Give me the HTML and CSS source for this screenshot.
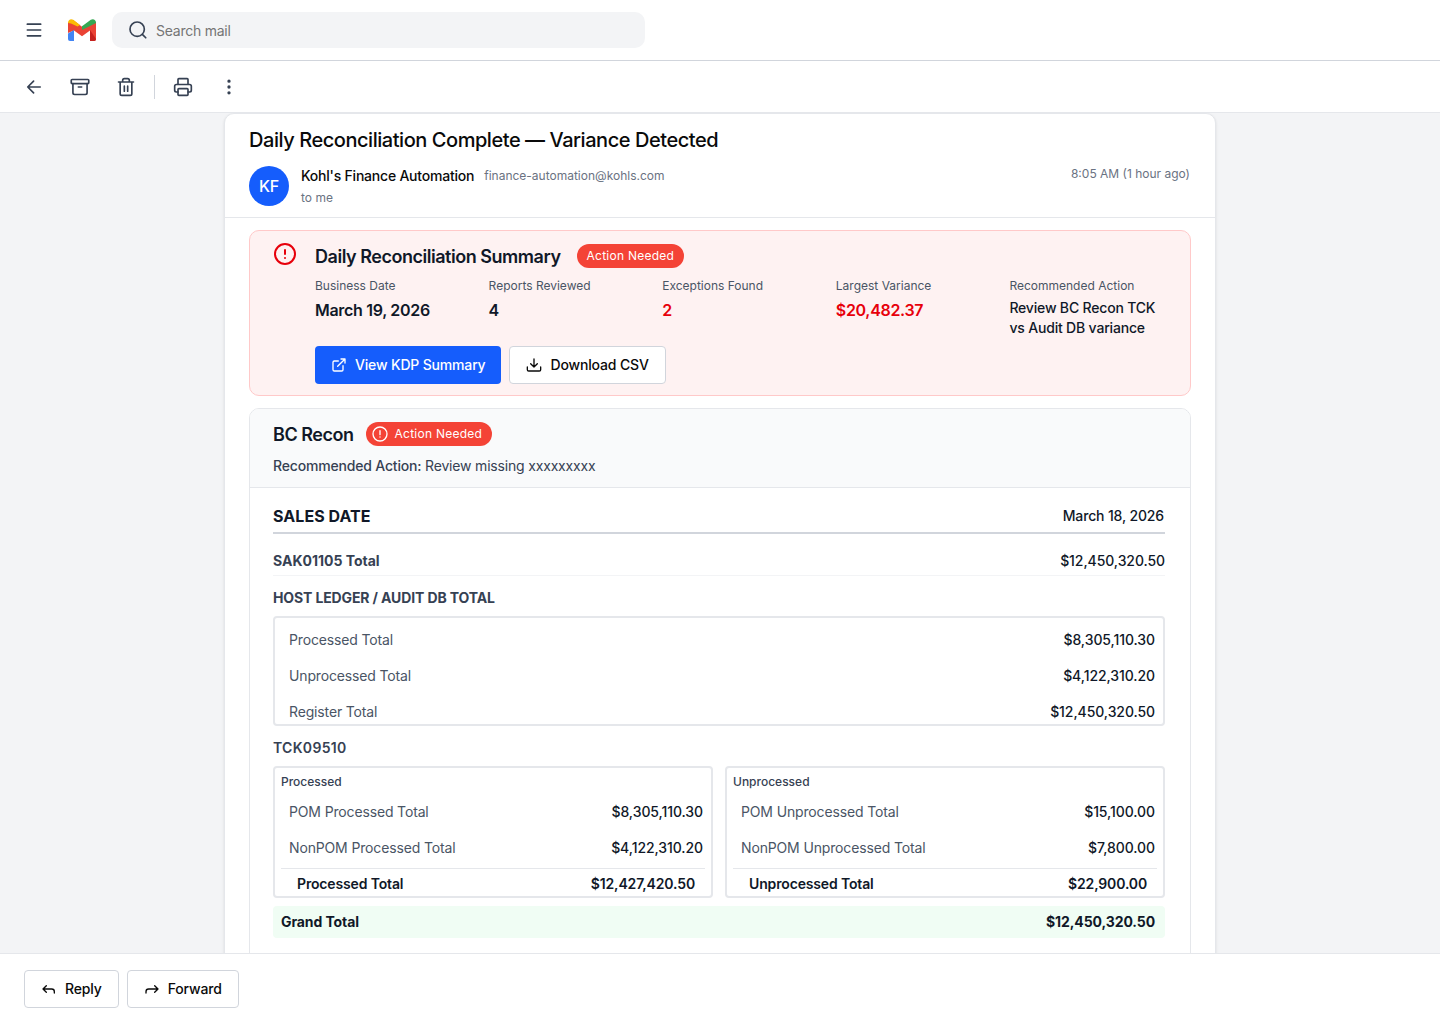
FILE: index.html
```html
<!DOCTYPE html>
<html lang="en">
<head>
  <meta charset="UTF-8">
  <title>Daily Reconciliation Complete — Variance Detected</title>
  <link rel="stylesheet" href="styles.css">
</head>
<body>
  <header class="topbar">
    <svg class="icon menu-icon" width="20" height="20" viewBox="0 0 24 24"><path d="M4 5h16M4 12h16M4 19h16"/></svg>
    <svg class="logo" width="28" height="22" viewBox="0 0 28 22">
      <path fill="#ea4335" d="M0 3.5L5.2 1 14 7.8 28 3v17a2 2 0 0 1-2 2h-4V11.5l-8 5.8-8-5.8L0 14z"/>
      <path fill="#4285f4" d="M0 14.5l6-3.5v11H2a2 2 0 0 1-2-2z"/>
      <path fill="#c5221f" d="M22 11l6 9a2 2 0 0 1-2 2h-4z"/>
      <path fill="#fbbc04" d="M0 4C0 .6 3-.8 5.2.8L12 6l-2.5 1.5L3 4.5z"/>
      <path fill="#34a853" d="M14 11V7.2L22.8.8C25-.8 28 .6 28 3.4V4z"/>
    </svg>
    <div class="search">
      <svg class="icon" width="20" height="20" viewBox="0 0 24 24"><circle cx="11" cy="11" r="8.6"/><path d="M21.3 21.3l-4.1-4.1"/></svg>
      <span>Search mail</span>
    </div>
  </header>

  <nav class="toolbar">
    <svg class="icon" width="20" height="20" viewBox="0 0 24 24"><path d="M11.5 19l-7-7 7-7M19.5 12h-15"/></svg>
    <svg class="icon" width="20" height="20" viewBox="0 0 24 24"><rect x="1.5" y="3" width="21" height="5" rx="1"/><path d="M3.5 8v11a2 2 0 0 0 2 2h13a2 2 0 0 0 2-2V8M10 12h4"/></svg>
    <svg class="icon" width="20" height="20" viewBox="0 0 24 24"><path d="M3 6h18M19 6v14a2 2 0 0 1-2 2H7a2 2 0 0 1-2-2V6M8 6V4a2 2 0 0 1 2-2h4a2 2 0 0 1 2 2v2M10 11v6M14 11v6"/></svg>
    <span class="divider"></span>
    <svg class="icon" width="20" height="20" viewBox="0 0 24 24"><path d="M6 18H4a2 2 0 0 1-2-2v-5a2 2 0 0 1 2-2h16a2 2 0 0 1 2 2v5a2 2 0 0 1-2 2h-2M6 9V3a1 1 0 0 1 1-1h10a1 1 0 0 1 1 1v6"/><rect x="6" y="14" width="12" height="8" rx="1"/></svg>
    <svg class="icon" width="20" height="20" viewBox="0 0 24 24"><circle cx="12" cy="5" r="1"/><circle cx="12" cy="12" r="1"/><circle cx="12" cy="19" r="1"/></svg>
  </nav>

  <main class="content">
    <article class="mail">
      <div class="mail-header">
        <h1>Daily Reconciliation Complete — Variance Detected</h1>
        <div class="sender">
          <div class="avatar">KF</div>
          <div class="sender-info">
            <div class="sender-line">
              <span class="sender-name">Kohl's Finance Automation</span>
              <span class="muted">finance-automation@kohls.com</span>
            </div>
            <div class="muted">to me</div>
          </div>
          <div class="muted time">8:05 AM (1 hour ago)</div>
        </div>
      </div>

      <section class="summary">
        <svg class="summary-icon" width="24" height="24" viewBox="0 0 24 24"><circle cx="12" cy="12" r="10"/><path d="M12 8v4M12 16h.01"/></svg>
        <div class="summary-body">
          <div class="title-row">
            <h2>Daily Reconciliation Summary</h2>
            <span class="badge">Action Needed</span>
          </div>
          <div class="stats">
            <div><div class="label">Business Date</div><div class="value">March 19, 2026</div></div>
            <div><div class="label">Reports Reviewed</div><div class="value">4</div></div>
            <div><div class="label">Exceptions Found</div><div class="value red">2</div></div>
            <div><div class="label">Largest Variance</div><div class="value red">$20,482.37</div></div>
            <div><div class="label">Recommended Action</div><div class="value small">Review BC Recon TCK vs Audit DB variance</div></div>
          </div>
          <div class="buttons">
            <button class="btn primary"><svg width="16" height="16" viewBox="0 0 24 24"><path d="M15 3h6v6M10 14L21 3M18 13v6a2 2 0 0 1-2 2H5a2 2 0 0 1-2-2V8a2 2 0 0 1 2-2h6"/></svg>View KDP Summary</button>
            <button class="btn"><svg width="16" height="16" viewBox="0 0 24 24"><path d="M12 15V3M22 15v4a2 2 0 0 1-2 2H4a2 2 0 0 1-2-2v-4M7 10l5 5 5-5"/></svg>Download CSV</button>
          </div>
        </div>
      </section>

      <section class="report">
        <div class="report-header">
          <div class="title-row">
            <h2>BC Recon</h2>
            <span class="badge with-icon"><svg width="16" height="16" viewBox="0 0 24 24"><circle cx="12" cy="12" r="10.5"/><path d="M12 7v6M12 16.5h.01"/></svg>Action Needed</span>
          </div>
          <p><b>Recommended Action:</b> Review missing xxxxxxxxx</p>
        </div>
        <div class="report-body">
          <div class="row sales-date"><span class="row-title">SALES DATE</span><span>March 18, 2026</span></div>
          <div class="row sak"><b>SAK01105 Total</b><span>$12,450,320.50</span></div>
          <h3>HOST LEDGER / AUDIT DB TOTAL</h3>
          <div class="box">
            <div class="row item"><span>Processed Total</span><b>$8,305,110.30</b></div>
            <div class="row item"><span>Unprocessed Total</span><b>$4,122,310.20</b></div>
            <div class="row item"><span>Register Total</span><b>$12,450,320.50</b></div>
          </div>
          <h3 class="tck">TCK09510</h3>
          <div class="columns">
            <div class="box split">
              <div class="box-title">Processed</div>
              <div class="row item"><span>POM Processed Total</span><b>$8,305,110.30</b></div>
              <div class="row item"><span>NonPOM Processed Total</span><b>$4,122,310.20</b></div>
              <div class="row subtotal"><span>Processed Total</span><span>$12,427,420.50</span></div>
            </div>
            <div class="box split">
              <div class="box-title">Unprocessed</div>
              <div class="row item"><span>POM Unprocessed Total</span><b>$15,100.00</b></div>
              <div class="row item"><span>NonPOM Unprocessed Total</span><b>$7,800.00</b></div>
              <div class="row subtotal"><span>Unprocessed Total</span><span>$22,900.00</span></div>
            </div>
          </div>
          <div class="row grand"><span>Grand Total</span><span>$12,450,320.50</span></div>
        </div>
      </section>
    </article>
  </main>

  <footer class="actions">
    <button class="btn"><svg width="16" height="16" viewBox="0 0 24 24"><path d="M20 18v-2a4 4 0 0 0-4-4H3M8 17l-5-5 5-5"/></svg>Reply</button>
    <button class="btn"><svg width="16" height="16" viewBox="0 0 24 24"><path d="M3 18v-2a4 4 0 0 1 4-4h14M16 17l5-5-5-5"/></svg>Forward</button>
  </footer>
</body>
</html>
```
FILE: styles.css
```css
* {
  box-sizing: border-box;
}
body {
  margin: 0;
  height: 1024px;
  display: flex;
  flex-direction: column;
  overflow: hidden;
  background: #fff;
  color: #101828;
  font-family: Inter, sans-serif;
  font-size: 14px;
  line-height: 20px;
  letter-spacing: -0.15px;
}
h1, h2, h3, p {
  margin: 0;
}
svg {
  fill: none;
  stroke: currentColor;
  stroke-width: 2;
  stroke-linecap: round;
  stroke-linejoin: round;
  flex-shrink: 0;
}

/* top bar */
.topbar {
  display: flex;
  align-items: center;
  height: 61px;
  padding: 0 24px;
  border-bottom: 1px solid #d1d5dc;
}
.icon {
  color: #364153;
}
.logo {
  margin-left: 24px;
  stroke: none;
}
.search {
  display: flex;
  align-items: center;
  gap: 8px;
  width: 533px;
  height: 36px;
  margin-left: 16px;
  padding: 0 16px;
  border-radius: 10px;
  background: #f3f4f6;
  color: #757575;
  letter-spacing: -0.25px;
}
.search span {
  padding-top: 1px;
}

.toolbar {
  display: flex;
  align-items: center;
  gap: 26px;
  height: 52px;
  padding: 0 24px;
  border-bottom: 1px solid #e5e7eb;
}
.divider {
  width: 1px;
  height: 24px;
  margin: 0 -8px;
  background: #d1d5dc;
}

/* mail */
.content {
  flex: 1;
  overflow: hidden;
  background: #f3f4f6;
}
.mail {
  width: 992px;
  height: 1200px;
  margin: 0 auto;
  border: 1px solid #e5e7eb;
  border-radius: 10px;
  background: #fff;
  box-shadow: 0 1px 3px rgba(0, 0, 0, 0.1);
}
.mail-header {
  height: 104px;
  padding: 12px 24px 0;
  border-bottom: 1px solid #e5e7eb;
}
h1 {
  color: #0a0a0a;
  font-size: 20px;
  font-weight: 500;
  line-height: 28px;
  letter-spacing: -0.45px;
}
.sender {
  display: flex;
  gap: 12px;
  margin-top: 12px;
}
.avatar {
  width: 40px;
  height: 40px;
  border-radius: 50%;
  background: #155dfc;
  color: #fff;
  font-size: 16px;
  font-weight: 500;
  line-height: 40px;
  letter-spacing: -0.31px;
  text-align: center;
}
.sender-info {
  flex: 1;
}
.sender-line {
  display: flex;
  gap: 10px;
  margin-bottom: 2px;
}
.sender-name {
  color: #0a0a0a;
  font-weight: 500;
  letter-spacing: -0.22px;
}
.muted {
  color: #6a7282;
  font-size: 12px;
  letter-spacing: 0;
}
.time {
  margin-right: 1px;
  line-height: 16px;
}

.summary {
  display: flex;
  gap: 18px;
  height: 166px;
  margin: 12px 24px 0;
  padding: 11px 23px 0;
  border: 1px solid #ffc9c9;
  border-radius: 10px;
  background: #fef2f2;
}
.summary-icon {
  color: #e7000b;
}
.summary-body {
  flex: 1;
}
.title-row {
  display: flex;
  align-items: center;
  height: 28px;
}
h2 {
  padding-top: 2px;
  font-size: 18px;
  font-weight: 600;
  line-height: 28px;
  letter-spacing: -0.47px;
}
.badge {
  display: flex;
  align-items: center;
  height: 24px;
  margin-left: 16px;
  padding: 0 10px;
  border-radius: 12px;
  background: #f44336;
  color: #fff;
  font-size: 12px;
  letter-spacing: 0.25px;
}
.with-icon {
  gap: 7px;
  margin-left: 12px;
  padding-left: 6px;
}
.stats {
  display: grid;
  grid-template-columns: repeat(5, 1fr);
  gap: 16px;
  height: 60px;
  margin-top: 8px;
}
.label {
  color: #4a5565;
  font-size: 12px;
  line-height: 16px;
  letter-spacing: 0;
}
.value {
  margin-top: 4px;
  font-size: 16px;
  font-weight: 600;
  line-height: 24px;
  letter-spacing: -0.31px;
}
.small {
  font-size: 14px;
  font-weight: 500;
  line-height: 20px;
  letter-spacing: -0.18px;
}
.red {
  color: #e7000b;
}
.buttons, .actions {
  display: flex;
  gap: 8px;
}
.buttons {
  margin-top: 8px;
}
.btn {
  display: flex;
  align-items: center;
  gap: 8px;
  height: 38px;
  padding: 0 16px 1px;
  border: 1px solid #d1d5dc;
  border-radius: 4px;
  background: #fff;
  color: #0a0a0a;
  font: 500 14px Inter, sans-serif;
  letter-spacing: -0.15px;
}
.primary {
  border: none;
  background: #155dfc;
  color: #fff;
  letter-spacing: -0.17px;
}

/* report */
.report {
  height: 900px;
  margin: 12px 24px 0;
  border: 1px solid #e5e7eb;
  border-radius: 10px;
  overflow: hidden;
}
.report-header {
  height: 79px;
  padding: 11px 23px 0;
  border-bottom: 1px solid #e5e7eb;
  background: #f9fafb;
  color: #364153;
}
.report-header h2 {
  color: #101828;
}
.report-header p {
  margin-top: 8px;
  letter-spacing: -0.18px;
}
.report-header b {
  font-weight: 500;
}
.report-body {
  padding: 16px 25px 0 23px;
}
.row {
  display: flex;
  justify-content: space-between;
}
.row b {
  font-weight: 500;
  letter-spacing: -0.08px;
}
.sales-date {
  height: 30px;
  padding-right: 1px;
  border-bottom: 2px solid #d1d5dc;
  font-weight: 500;
  line-height: 24px;
}
.row-title {
  font-size: 16px;
  font-weight: 700;
  letter-spacing: 0.05px;
}
.sak {
  height: 26px;
  margin-top: 16px;
  padding-top: 1px;
  border-bottom: 1px solid #f3f4f6;
  font-weight: 500;
  letter-spacing: -0.08px;
}
.sak b {
  color: #364153;
  font-weight: 700;
  letter-spacing: 0;
}
h3 {
  margin: 12px 0 8px;
  color: #364153;
  font-size: 14px;
  font-weight: 700;
  line-height: 20px;
  letter-spacing: -0.13px;
}
.tck {
  font-weight: 600;
  letter-spacing: 0.3px;
}
.box {
  height: 110px;
  padding: 4px 8px 0 14px;
  border: 2px solid #e5e7eb;
  border-radius: 4px;
}
.item {
  height: 36px;
  padding-top: 8px;
}
.item span {
  color: #4a5565;
}
.columns {
  display: grid;
  grid-template-columns: 1fr 1fr;
  gap: 12px;
}
.split {
  height: 132px;
  padding: 5px 6px 0;
}
.split .item {
  padding: 8px 2px 0 8px;
}
.box-title {
  height: 21px;
  color: #364153;
  font-size: 12px;
  font-weight: 500;
  line-height: 18px;
  letter-spacing: 0;
}
.subtotal {
  margin-top: 2px;
  padding: 5px 10px 0 16px;
  border-top: 1px solid #e5e7eb;
  font-weight: 600;
}
.grand {
  height: 32px;
  margin-top: 8px;
  padding: 6px 10px 0 8px;
  border-radius: 4px;
  background: #f0fdf4;
  font-weight: 700;
  letter-spacing: -0.1px;
}

.actions {
  height: 71px;
  padding: 16px 24px;
  border-top: 1px solid #e5e7eb;
}
```
